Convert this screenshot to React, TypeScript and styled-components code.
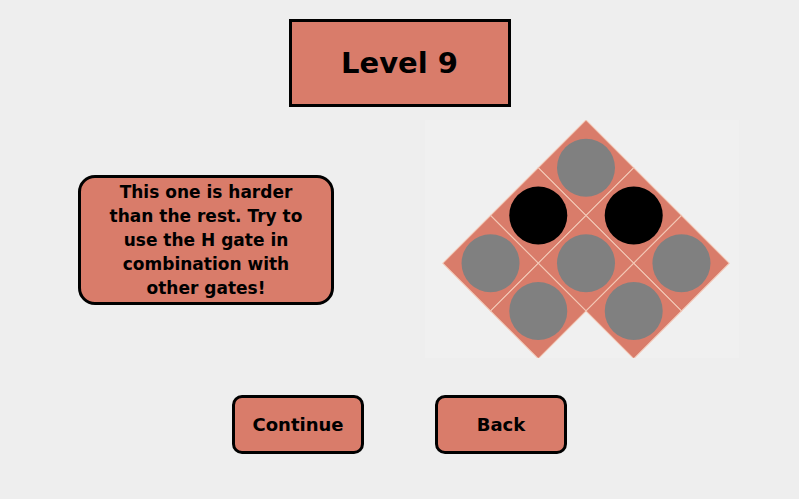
import React from 'react'
import styled, { createGlobalStyle } from 'styled-components'

const GlobalStyle = createGlobalStyle`
  html, body {
    margin: 0;
    padding: 0;
    background: #eeeeee;
  }
  body {
    font-family: "DejaVu Sans", "Liberation Sans", sans-serif;
  }
`

const Page = styled.div`
  width: 799px;
  height: 499px;
  display: flex;
  flex-direction: column;
  align-items: center;
  padding-top: 19px;
  box-sizing: border-box;
`

const TitleBox = styled.div`
  width: 222px;
  height: 88px;
  box-sizing: border-box;
  border: 3px solid #000;
  background: #d97c6a;
  display: flex;
  align-items: center;
  justify-content: center;
  font-size: 29px;
  font-weight: 700;
  color: #000;
`

const Middle = styled.div`
  width: 100%;
  display: flex;
  align-items: center;
  margin-top: 13px;
`

const InfoBox = styled.div`
  width: 256px;
  height: 130px;
  margin-left: 78px;
  margin-top: 2px;
  box-sizing: border-box;
  border: 3px solid #000;
  border-radius: 17px;
  background: #d97c6a;
  display: flex;
  align-items: center;
  justify-content: center;
  text-align: center;
  padding: 0 19px;
  font-size: 17px;
  line-height: 24px;
  font-weight: 700;
  color: #000;
`

const Board = styled.div`
  width: 314px;
  height: 238px;
  margin-left: 91px;
  background: #f0f0f0;
  display: flex;
  align-items: center;
  justify-content: center;
`

const Buttons = styled.div`
  display: flex;
  gap: 71px;
  margin-top: 37px;
`

const Button = styled.button`
  width: 132px;
  height: 59px;
  box-sizing: border-box;
  border: 3px solid #000;
  border-radius: 10px;
  background: #d97c6a;
  font-family: "DejaVu Sans", "Liberation Sans", sans-serif;
  font-size: 18px;
  font-weight: 700;
  color: #000;
  cursor: pointer;
`

type Cell = { i: number; j: number; dark: boolean }

const cells: Cell[] = [
  { i: 0, j: 0, dark: false },
  { i: 1, j: 0, dark: true },
  { i: 0, j: 1, dark: true },
  { i: 2, j: 0, dark: false },
  { i: 1, j: 1, dark: false },
  { i: 0, j: 2, dark: false },
  { i: 2, j: 1, dark: false },
  { i: 1, j: 2, dark: false },
]

const SIDE = 67.5

const GateBoard = () => (
  <svg width="314" height="238" viewBox="0 0 314 238">
    <g transform="translate(161 0) rotate(45)">
      {cells.map((c) => (
        <g key={`${c.i}-${c.j}`}>
          <rect
            x={c.j * SIDE}
            y={c.i * SIDE}
            width={SIDE}
            height={SIDE}
            fill="#d97c6a"
            stroke="#f3c8b6"
            strokeWidth="1"
          />
          <circle
            cx={c.j * SIDE + SIDE / 2}
            cy={c.i * SIDE + SIDE / 2}
            r={29}
            fill={c.dark ? '#000' : '#808080'}
          />
        </g>
      ))}
    </g>
  </svg>
)

const App = () => {
  return (
    <>
      <GlobalStyle />
      <Page>
        <TitleBox>Level 9</TitleBox>
        <Middle>
          <InfoBox>This one is harder than the rest. Try to use the H gate in combination with other gates!</InfoBox>
          <Board>
            <GateBoard />
          </Board>
        </Middle>
        <Buttons>
          <Button>Continue</Button>
          <Button>Back</Button>
        </Buttons>
      </Page>
    </>
  )
}

export default App
